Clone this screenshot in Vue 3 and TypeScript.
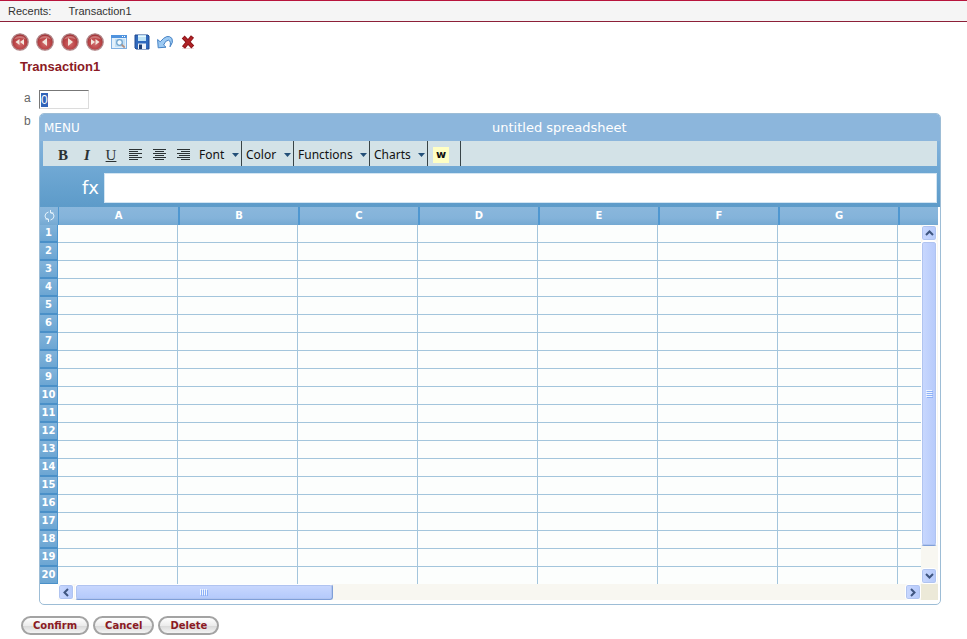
<script setup lang="ts">
import { onMounted, ref } from 'vue'

interface Nav {
  label: string
  paths: string[]
}

const navs: Nav[] = [
  { label: 'First', paths: ['M8.5 6v6L4.5 9z', 'M13 6v6L9 9z'] },
  { label: 'Previous', paths: ['M11 5v8L6 9z'] },
  { label: 'Next', paths: ['M7 5v8l5-4z'] },
  { label: 'Last', paths: ['M5 6v6l4-3z', 'M9.5 6v6l4-3z'] },
]
const aligns = [
  { label: 'Align left', d: 'M0 .5h13M0 2.5h9M0 4.5h13M0 6.5h9M0 8.5h13M0 10.5h9' },
  { label: 'Align center', d: 'M0 .5h13M2 2.5h9M0 4.5h13M2 6.5h9M0 8.5h13M2 10.5h9' },
  { label: 'Align right', d: 'M0 .5h13M4 2.5h9M0 4.5h13M2 6.5h11M0 8.5h13M4 10.5h9' },
]
const menus = ['Font', 'Color', 'Functions', 'Charts']
const columns = ['A', 'B', 'C', 'D', 'E', 'F', 'G']
const rows = 20
const actions = ['Confirm', 'Cancel', 'Delete']

const a = ref('0')
const aField = ref<HTMLInputElement | null>(null)

onMounted(() => {
  aField.value?.focus()
  aField.value?.select()
})
</script>

<template>
  <div class="page">
    <nav class="recents">
      <span>Recents:</span>
      <a href="#">Transaction1</a>
    </nav>

    <div class="tools">
      <button v-for="n in navs" :key="n.label" class="tool nav" :aria-label="n.label">
        <svg width="18" height="18" viewBox="0 0 18 18">
          <defs>
            <radialGradient :id="'ball' + n.label" cx=".5" cy=".6" r=".55">
              <stop offset="0" stop-color="#d07070" />
              <stop offset=".6" stop-color="#bd4648" />
              <stop offset="1" stop-color="#a03438" />
            </radialGradient>
          </defs>
          <circle cx="9" cy="9" r="8.2" :fill="`url(#ball${n.label})`" stroke="#b08587" stroke-width="1.3" />
          <path d="M3 6.500a6.500 5.500 0 0 1 12 0Q9 3.500 3 6.500" fill="#dc9a98" opacity=".6" />
          <path v-for="p in n.paths" :key="p" :d="p" fill="#f3e6dc" />
        </svg>
      </button>
      <button class="tool" aria-label="Search">
        <svg width="16" height="16" viewBox="0 0 16 16">
          <rect x=".5" y="1.500" width="15" height="13" fill="#e2f0fb" stroke="#7fb0e2" />
          <rect x="0" y="1" width="16" height="3" fill="#4f93de" />
          <path d="M11 2.500h1M13 2.500h1" stroke="#fff" />
          <rect x="4" y="5" width="10" height="8" fill="#c3dff4" />
          <circle cx="8.500" cy="8.500" r="2.800" fill="#f2faff" stroke="#70a5cf" stroke-width="1.300" />
          <path d="M10.700 10.700l3 3" stroke="#b08f80" stroke-width="1.800" />
        </svg>
      </button>
      <button class="tool" aria-label="Save">
        <svg width="16" height="16" viewBox="0 0 16 16">
          <path d="M1 1h13l1 1v13H2l-1-1z" fill="#3069bd" stroke="#204b92" />
          <rect x="4" y="1" width="8" height="6" fill="#bfe4f6" />
          <path d="M4 2.500h8" stroke="#e9f7fd" />
          <rect x="4" y="9.500" width="8" height="5.500" fill="#eef3fa" />
          <rect x="5" y="10.500" width="3" height="4.500" fill="#1f3e72" />
        </svg>
      </button>
      <button class="tool" aria-label="Undo">
        <svg width="16" height="16" viewBox="0 0 16 16">
          <path
            d="M.6 5.500l.6 8.300 7.800-.6L6.600 11Q8.500 6 11.500 6.200q2.800.8 1.500 6.600 3.800-4.800 2-8.300Q10.500-1 3.200 7.800z"
            fill="#9dcaf3" stroke="#4682c4" stroke-linejoin="round"
          />
        </svg>
      </button>
      <button class="tool" aria-label="Remove">
        <svg width="16" height="16" viewBox="0 0 16 16">
          <path d="M2 14.500h12" stroke="#f0dcdc" />
          <path d="M3.200 3l9.600 10M12.500 2.500l-9 11" stroke="#8c1519" stroke-width="4" />
          <path d="M3.700 3.500l8.600 9M12 3.200l-8 9.600" stroke="#b02226" stroke-width="2.200" />
        </svg>
      </button>
    </div>

    <h1>Transaction1</h1>

    <div class="form">
      <label for="field-a">a</label>
      <input id="field-a" ref="aField" v-model="a" class="field" type="text" />
      <span class="tag">b</span>

      <section class="sheet" aria-label="b">
        <header class="head">
          <button class="menu">MENU</button>
          <span class="name">untitled spreadsheet</span>
        </header>
        <div class="band">
          <div class="bar">
            <button class="glyph bold">B</button>
            <button class="glyph italic">I</button>
            <button class="glyph under">U</button>
            <button v-for="al in aligns" :key="al.label" class="glyph" :aria-label="al.label">
              <svg width="13" height="11" viewBox="0 0 13 11"><path :d="al.d" stroke="#2b3234" /></svg>
            </button>
            <div v-for="m in menus" :key="m" class="drop">
              <select :aria-label="m"><option>{{ m }}</option></select>
              <svg class="caret" width="7" height="4" viewBox="0 0 7 4"><path d="M0 0h7L3.500 4z" fill="#234f78" /></svg>
            </div>
            <div class="wiki"><button>w</button></div>
          </div>
          <div class="formula">
            <label for="fx">fx</label>
            <input id="fx" type="text" />
          </div>
        </div>

        <div class="grid">
          <div class="view">
            <table>
              <colgroup>
                <col class="c-num" />
                <col v-for="c in columns" :key="c" class="c-col" />
                <col />
              </colgroup>
              <thead>
                <tr>
                  <th class="corner">
                    <svg width="11" height="12" viewBox="0 0 11 12" fill="none" stroke="#e4f2fb">
                      <path d="M4.500 9.500Q1 9 1 6t3.500-4M6.500 2.500Q10 3 10 6t-3.500 4M6.500 0v3h3M4.500 12V9h-3" />
                    </svg>
                  </th>
                  <th v-for="c in columns" :key="c">{{ c }}</th>
                  <th></th>
                </tr>
              </thead>
              <tbody>
                <tr v-for="r in rows" :key="r">
                  <th>{{ r }}</th>
                  <td v-for="c in columns" :key="c"></td>
                  <td class="last"></td>
                </tr>
              </tbody>
            </table>
          </div>
          <div class="side">
            <div class="cap"></div>
            <div class="scroll vertical">
              <button class="arrow" aria-label="Scroll up">
                <svg width="9" height="6" viewBox="0 0 9 6"><path d="M1 5l3.500-3.500L8 5" /></svg>
              </button>
              <div class="thumb">
                <svg width="7" height="8" viewBox="0 0 7 8">
                  <path d="M0 .5h6M0 2.500h6M0 4.500h6M0 6.500h6" stroke="#eef4fe" />
                  <path d="M1 1.500h6M1 3.500h6M1 5.500h6M1 7.500h6" stroke="#8cb0f8" />
                </svg>
              </div>
              <div class="rest"></div>
              <button class="arrow" aria-label="Scroll down">
                <svg width="9" height="6" viewBox="0 0 9 6"><path d="M1 1l3.500 3.500L8 1" /></svg>
              </button>
            </div>
          </div>
          <div class="scroll horizontal">
            <button class="arrow" aria-label="Scroll left">
              <svg width="6" height="9" viewBox="0 0 6 9"><path d="M5 1L1.500 4.500 5 8" /></svg>
            </button>
            <div class="thumb">
              <svg width="8" height="7" viewBox="0 0 8 7">
                <path d="M.5 0v6M2.500 0v6M4.500 0v6M6.500 0v6" stroke="#eef4fe" />
                <path d="M1.500 1v6M3.500 1v6M5.500 1v6M7.500 1v6" stroke="#8cb0f8" />
              </svg>
            </div>
            <div class="rest"></div>
            <button class="arrow" aria-label="Scroll right">
              <svg width="6" height="9" viewBox="0 0 6 9"><path d="M1 1l3.500 3.500L1 8" /></svg>
            </button>
          </div>
          <div class="elbow"></div>
        </div>
      </section>
    </div>

    <div class="actions">
      <button v-for="x in actions" :key="x">{{ x }}</button>
    </div>
  </div>
</template>

<style>
body {
  margin: 0;
  background: #fff;
}
</style>

<style scoped>
.page {
  font-family: 'Liberation Sans', Arial, sans-serif;
  font-size: 11px;
  color: #444;
}
.page *,
.page *::before {
  box-sizing: border-box;
}
button {
  margin: 0;
  padding: 0;
  border: 0;
  background: none;
  font: inherit;
  color: inherit;
}
svg {
  display: block;
  flex: none;
}
.recents {
  display: flex;
  align-items: center;
  gap: 17px;
  height: 22px;
  padding: 0 8px;
  border-top: 1px solid #b8143c;
  border-bottom: 1px solid #8c2038;
  background: #f5f5f5;
  color: #333;
}
.recents a {
  color: inherit;
  text-decoration: none;
}
.tools {
  display: flex;
  align-items: center;
  gap: 7px;
  height: 18px;
  margin: 11px 0 0 11px;
}
h1 {
  margin: 8px 0 0 20px;
  font-size: 13px;
  line-height: 16px;
  color: #8b1a24;
}
.form {
  display: grid;
  grid-template-columns: 15px minmax(0, 1fr);
  row-gap: 4px;
  margin: 15px 26px 0 24px;
  font-size: 12px;
  line-height: 16px;
  color: #666;
}
.field {
  width: 50px;
  height: 19px;
  padding: 0 1px;
  border: 1px solid #dcdcdc;
  border-top-color: #777;
  border-left-color: #777;
  outline: 0;
  background: #fff;
  font: 12px 'Liberation Sans', Arial, sans-serif;
  color: #222;
}
.field::selection {
  background: #3163b8;
  color: #fff;
}
.sheet {
  overflow: hidden;
  padding-bottom: 4px;
  border: 1px solid #9dbdd6;
  border-radius: 5px;
  background: #fff;
  font-family: 'DejaVu Sans', Verdana, sans-serif;
}
.head {
  display: grid;
  grid-template-columns: 1fr 1fr;
  align-items: center;
  height: 27px;
  padding: 0 0 0 4px;
  background: #8cb6dc;
  color: #fff;
}
.menu {
  justify-self: start;
  font-size: 12px;
}
.name {
  font-size: 13px;
}
.band {
  padding: 0 3px 4px;
  background: linear-gradient(#82b2db, #6ea7d3 30px, #5d9bc9);
}
.bar {
  display: flex;
  height: 25px;
  padding-left: 8px;
  background: #d3e2e7;
  color: #111;
}
.glyph {
  display: grid;
  place-items: center;
  padding-top: 2px;
  width: 24px;
  font-family: 'Liberation Serif', serif;
  font-size: 15px;
  color: #2b3234;
}
.bold {
  font-weight: bold;
}
.italic {
  font-style: italic;
  font-weight: bold;
}
.under {
  text-decoration: underline;
}
.drop {
  display: flex;
  align-items: center;
  padding-top: 2px;
  border-right: 1px solid #384448;
}
.drop select {
  appearance: none;
  height: 23px;
  padding: 0 7px 0 4px;
  border: 0;
  border-radius: 0;
  outline: 0;
  background: none;
  font: 12px 'Noto Sans', Tahoma, sans-serif;
  color: #111;
}
.caret {
  margin-right: 2px;
}
.wiki {
  display: flex;
  align-items: center;
  width: 33px;
  padding: 2px 0 0 5px;
  border-right: 1px solid #384448;
}
.wiki button {
  width: 16px;
  height: 16px;
  background: #ffffc4;
  font: bold 11px/14px 'DejaVu Sans', Verdana, sans-serif;
  color: #111;
}
.formula {
  display: flex;
  align-items: center;
  gap: 5px;
  padding-top: 7px;
}
.formula label {
  width: 56px;
  font-size: 18px;
  text-align: right;
  color: #fff;
}
.formula input {
  flex: 1;
  min-width: 0;
  height: 30px;
  padding: 0 4px;
  border: 1px solid #d3e5f2;
  outline: 0;
  background: #fff;
  font: inherit;
}
.grid {
  display: grid;
  grid-template-columns: minmax(0, 1fr) 17px;
  padding-right: 2px;
}
.view {
  overflow: hidden;
}
table {
  width: 100%;
  table-layout: fixed;
  border-collapse: separate;
  border-spacing: 0;
}
.c-num {
  width: 18px;
}
.c-col {
  width: 120px;
}
th,
td {
  height: 18px;
  padding: 0;
}
th {
  font-size: 10px;
  line-height: 14px;
  color: #fff;
}
thead th,
.cap {
  background: linear-gradient(#8ab7dc, #84b3da 11px, #74a9d2);
}
thead th {
  border-left: 2px solid #4f97d0;
}
thead .corner {
  border-left: 0;
}
thead .corner + th {
  border-left-width: 1px;
}
.corner svg {
  margin: 0 auto;
}
tbody th {
  border-right: 1px solid #4f97d0;
  border-bottom: 2px solid #4a90c8;
  background: linear-gradient(#82b3da, #6ca6d3);
}
td {
  border-right: 1px solid #a3c5dc;
  border-bottom: 1px solid #a3c5dc;
  background: #fcfefd;
}
td.last {
  border-right: 0;
}
tbody tr:last-child th,
tbody tr:last-child td {
  height: 17px;
}
tbody tr:last-child th {
  border-bottom-width: 1px;
}
tbody tr:last-child td {
  border-bottom: 0;
}
.side {
  display: flex;
  flex-direction: column;
}
.cap {
  height: 18px;
}
.scroll {
  display: flex;
  background: #f8f7f1;
}
.vertical {
  flex: 1;
  flex-direction: column;
}
.horizontal {
  height: 16px;
  margin-left: 18px;
}
.arrow,
.thumb {
  display: grid;
  place-items: center;
  border: 1px solid #fff;
  border-radius: 3px;
  background: linear-gradient(90deg, #c9d8fe, #b6cafb);
  box-shadow: inset 0 0 0 1px #b0c4f0;
}
.arrow {
  flex: none;
  width: 16px;
  height: 16px;
}
.arrow path {
  fill: none;
  stroke: #3f5680;
  stroke-width: 2;
}
.vertical .arrow,
.vertical .thumb {
  width: 16px;
}
.vertical .thumb {
  flex: 305;
  border-bottom-color: #7f9fd8;
}
.vertical .rest {
  flex: 22;
}
.horizontal .thumb {
  flex: 257;
  margin-left: 1px;
  border-right-color: #7f9fd8;
  border-bottom-color: #7f9fd8;
  background: linear-gradient(#c9d8fe, #b3c9fb);
}
.horizontal .rest {
  flex: 574;
}
.elbow {
  background: #ece9d8;
}
.actions {
  display: flex;
  gap: 4px;
  margin: 11px 0 0 21px;
}
.actions button {
  height: 19px;
  padding: 0 10px;
  border: 2px solid #a3a3a3;
  border-radius: 10px;
  background: linear-gradient(#fff, #ececec 50%, #dadada 55%, #f4f4f4);
  font: bold 10px/15px 'DejaVu Sans', Verdana, sans-serif;
  color: #8b1a24;
}
</style>
